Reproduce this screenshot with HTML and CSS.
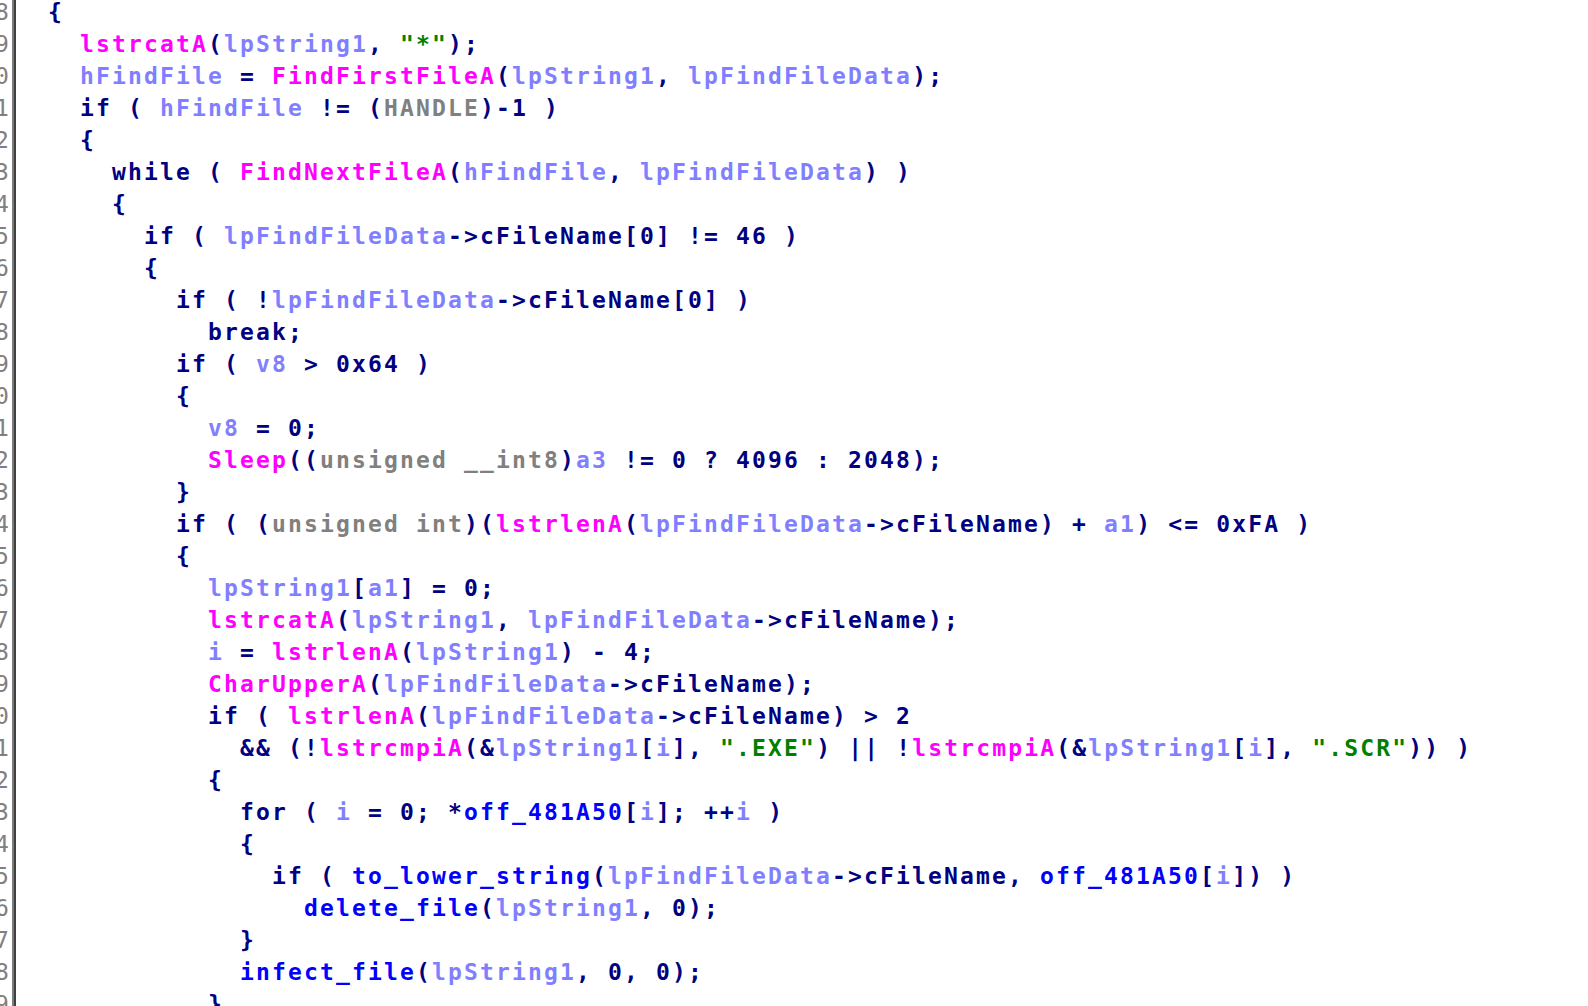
FILE: index.html
```html
<!DOCTYPE html>
<html>
<head>
<meta charset="utf-8">
<link rel="stylesheet" href="styles.css">
</head>
<body>
<div class="view">
  <div class="gutter"><div class="lines"><div>58</div><div>59</div><div>60</div><div>61</div><div>62</div><div>63</div><div>64</div><div>65</div><div>66</div><div>67</div><div>68</div><div>69</div><div>70</div><div>71</div><div>72</div><div>73</div><div>74</div><div>75</div><div>76</div><div>77</div><div>78</div><div>79</div><div>80</div><div>81</div><div>82</div><div>83</div><div>84</div><div>85</div><div>86</div><div>87</div><div>88</div><div>89</div></div></div>
  <div class="code">
    <div class="lines">
      <div class="ln">  {</div>
      <div class="ln">    <span class="f">lstrcatA</span>(<span class="v">lpString1</span>, <span class="s">"*"</span>);</div>
      <div class="ln">    <span class="v">hFindFile</span> = <span class="f">FindFirstFileA</span>(<span class="v">lpString1</span>, <span class="v">lpFindFileData</span>);</div>
      <div class="ln">    if ( <span class="v">hFindFile</span> != (<span class="t">HANDLE</span>)-1 )</div>
      <div class="ln">    {</div>
      <div class="ln">      while ( <span class="f">FindNextFileA</span>(<span class="v">hFindFile</span>, <span class="v">lpFindFileData</span>) )</div>
      <div class="ln">      {</div>
      <div class="ln">        if ( <span class="v">lpFindFileData</span>-&gt;cFileName[0] != 46 )</div>
      <div class="ln">        {</div>
      <div class="ln">          if ( !<span class="v">lpFindFileData</span>-&gt;cFileName[0] )</div>
      <div class="ln">            break;</div>
      <div class="ln">          if ( <span class="v">v8</span> &gt; 0x64 )</div>
      <div class="ln">          {</div>
      <div class="ln">            <span class="v">v8</span> = 0;</div>
      <div class="ln">            <span class="f">Sleep</span>((<span class="t">unsigned __int8</span>)<span class="v">a3</span> != 0 ? 4096 : 2048);</div>
      <div class="ln">          }</div>
      <div class="ln">          if ( (<span class="t">unsigned int</span>)(<span class="f">lstrlenA</span>(<span class="v">lpFindFileData</span>-&gt;cFileName) + <span class="v">a1</span>) &lt;= 0xFA )</div>
      <div class="ln">          {</div>
      <div class="ln">            <span class="v">lpString1</span>[<span class="v">a1</span>] = 0;</div>
      <div class="ln">            <span class="f">lstrcatA</span>(<span class="v">lpString1</span>, <span class="v">lpFindFileData</span>-&gt;cFileName);</div>
      <div class="ln">            <span class="v">i</span> = <span class="f">lstrlenA</span>(<span class="v">lpString1</span>) - 4;</div>
      <div class="ln">            <span class="f">CharUpperA</span>(<span class="v">lpFindFileData</span>-&gt;cFileName);</div>
      <div class="ln">            if ( <span class="f">lstrlenA</span>(<span class="v">lpFindFileData</span>-&gt;cFileName) &gt; 2</div>
      <div class="ln">              &amp;&amp; (!<span class="f">lstrcmpiA</span>(&amp;<span class="v">lpString1</span>[<span class="v">i</span>], <span class="s">".EXE"</span>) || !<span class="f">lstrcmpiA</span>(&amp;<span class="v">lpString1</span>[<span class="v">i</span>], <span class="s">".SCR"</span>)) )</div>
      <div class="ln">            {</div>
      <div class="ln">              for ( <span class="v">i</span> = 0; *<span class="u">off_481A50</span>[<span class="v">i</span>]; ++<span class="v">i</span> )</div>
      <div class="ln">              {</div>
      <div class="ln">                if ( <span class="u">to_lower_string</span>(<span class="v">lpFindFileData</span>-&gt;cFileName, <span class="u">off_481A50</span>[<span class="v">i</span>]) )</div>
      <div class="ln">                  <span class="u">delete_file</span>(<span class="v">lpString1</span>, 0);</div>
      <div class="ln">              }</div>
      <div class="ln">              <span class="u">infect_file</span>(<span class="v">lpString1</span>, 0, 0);</div>
      <div class="ln">            }</div>
    </div>
  </div>
</div>
</body>
</html>
```
FILE: styles.css
```css
html, body {
  margin: 0;
  padding: 0;
  background: #ffffff;
  overflow: hidden;
}

.view {
  display: flex;
  height: 100vh;
  font-family: "DejaVu Sans Mono", monospace;
  font-weight: bold;
  font-size: 23px;
  letter-spacing: 2.153px;
  line-height: 32px;
  color: #000080;
}

.lines {
  margin-top: -4px;
}

.gutter {
  flex: none;
  width: 11px;
  padding-right: 1px;
  overflow: hidden;
  direction: rtl;
  color: #808080;
  font-weight: normal;
  border-right: 2px solid #7c7c7c;
}

.code {
  flex: 1;
  overflow: hidden;
  border-left: 2px solid #404040;
}

.ln {
  white-space: pre;
}

.v { color: #8080ff; }
.f { color: #ff00ff; }
.t { color: #808080; }
.s { color: #008000; }
.u { color: #0000ff; }
```
